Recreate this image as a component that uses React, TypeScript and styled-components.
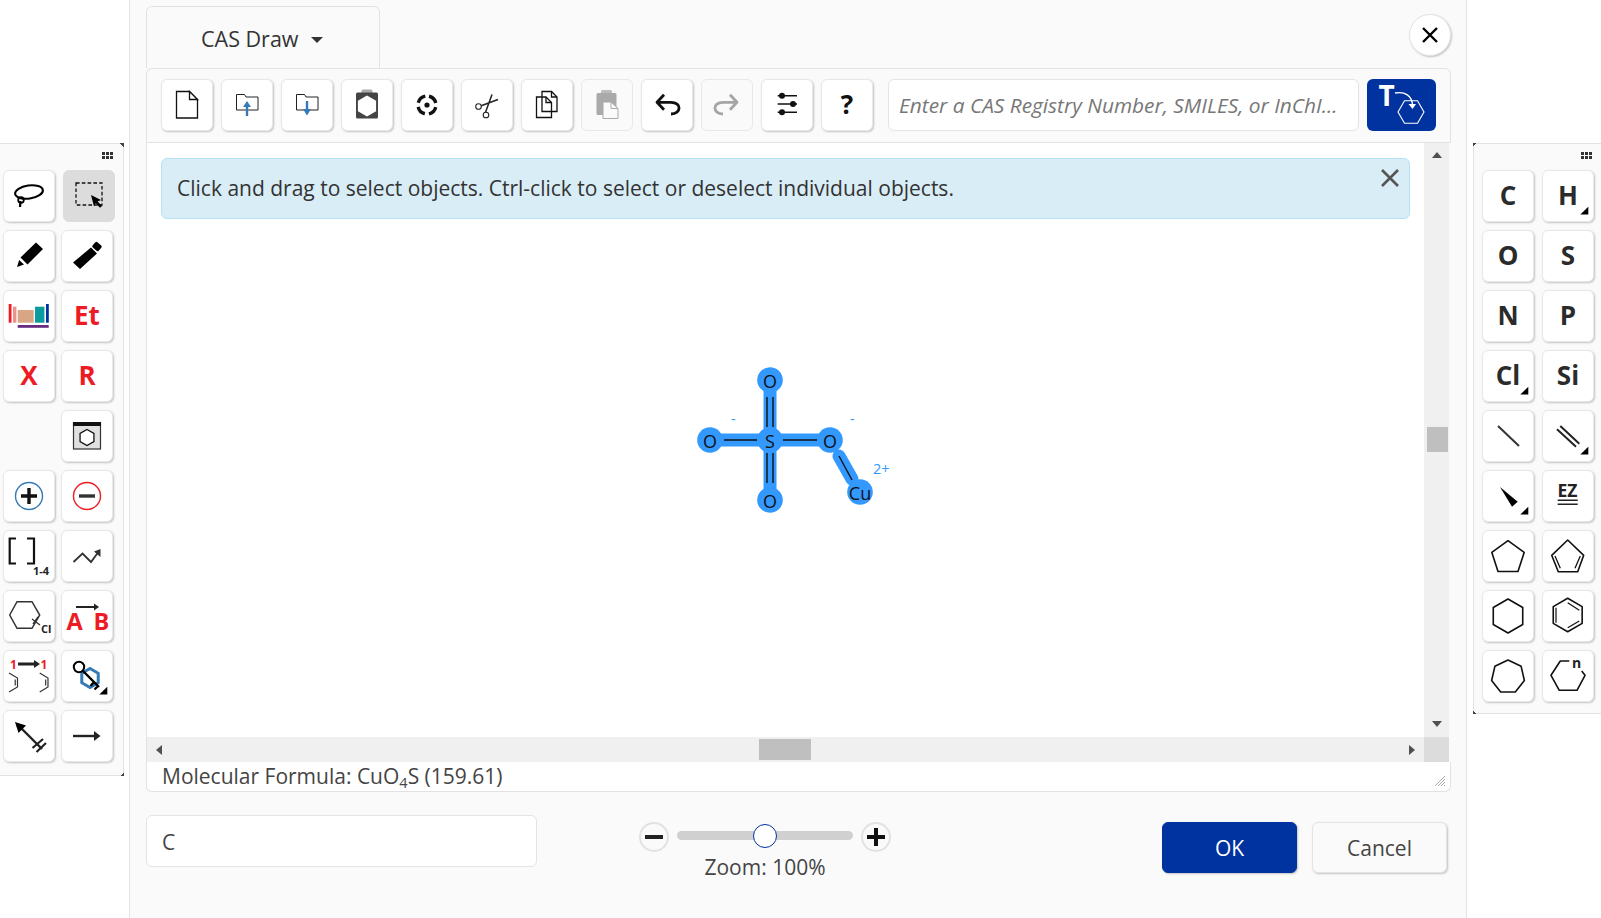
import React from "react";
import styled, { createGlobalStyle } from "styled-components";

const Global = createGlobalStyle`
  html, body { margin: 0; padding: 0; background: #fff; }
  body { font-family: "Open Sans", "Noto Sans", sans-serif; color: #333; overflow: hidden; }
  * { box-sizing: border-box; }
`;

const RED = "#ed1c24";
const BLUE = "#337ab7";
const NAVY = "#0033a0";

const Page = styled.div`
  display: flex;
  width: 1601px;
  height: 918px;
  align-items: flex-start;
  background: #fff;
`;

const SidePanel = styled.aside<{ $side: "left" | "right"; $height: number }>`
  position: relative;
  flex: none;
  width: ${(p) => (p.$side === "left" ? "124px" : "128px")};
  height: ${(p) => p.$height}px;
  margin-top: 143px;
  margin-left: ${(p) => (p.$side === "left" ? "0" : "6px")};
  background: #fafafa;
  border-top: 1px solid #e2e2e2;
  border-bottom: 1px solid #e2e2e2;
  border-left: ${(p) => (p.$side === "right" ? "1px solid #e2e2e2" : "none")};
  border-right: ${(p) => (p.$side === "left" ? "1px solid #e2e2e2" : "none")};
  padding: 26px 0 0 ${(p) => (p.$side === "left" ? "3px" : "8px")};
  &::before {
    content: "";
    position: absolute;
    top: -1px;
    ${(p) => (p.$side === "left" ? "right: -1px;" : "left: -1px;")}
    width: 4px;
    height: 4px;
    background: linear-gradient(
      ${(p) => (p.$side === "left" ? "225deg" : "135deg")},
      #444 50%,
      transparent 50%
    );
  }
  &::after {
    content: "";
    position: absolute;
    bottom: -1px;
    ${(p) => (p.$side === "left" ? "right: -1px;" : "left: -1px;")}
    width: 4px;
    height: 4px;
    background: linear-gradient(
      ${(p) => (p.$side === "left" ? "315deg" : "45deg")},
      #444 50%,
      transparent 50%
    );
  }
`;

const Grip = styled.div<{ $side: "left" | "right" }>`
  position: absolute;
  top: 8px;
  right: ${(p) => (p.$side === "left" ? "10px" : "9px")};
  display: grid;
  grid-template-columns: repeat(3, 3px);
  gap: 1px;
  span {
    width: 3px;
    height: 3px;
    background: #333;
  }
`;

const ToolGrid = styled.div<{ $gap: number }>`
  display: grid;
  grid-template-columns: 52px 52px;
  grid-auto-rows: 52px;
  column-gap: ${(p) => p.$gap}px;
  row-gap: 8px;
`;

const ToolBtn = styled.div<{ $color?: string; $active?: boolean; $disabled?: boolean }>`
  flex: none;
  width: 52px;
  height: 52px;
  display: flex;
  align-items: center;
  justify-content: center;
  padding-bottom: 2px;
  border-radius: 6px;
  background: ${(p) => (p.$active ? "#dcdcdc" : p.$disabled ? "#fafafa" : "#fff")};
  border: 1px solid ${(p) => (p.$active ? "#dcdcdc" : "#e8e8e8")};
  box-shadow: ${(p) => (p.$disabled || p.$active ? "none" : "1px 1px 2px rgba(0,0,0,.22)")};
  color: ${(p) => p.$color ?? "#2b2b2b"};
  font-weight: 700;
  font-size: 26px;
  line-height: 1;
  margin-left: ${(p) => (p.$active ? "2px" : "0")};
  svg { flex: none; margin-bottom: -2px; overflow: visible; }
`;

const Blank = styled.div``;

const Dialog = styled.main`
  flex: none;
  width: 1338px;
  height: 918px;
  margin-left: 5px;
  background: #fafafa;
  border-left: 1px solid #e2e2e2;
  border-right: 1px solid #e2e2e2;
  padding: 6px 15px 0 16px;
  display: flex;
  flex-direction: column;
`;

const TabRow = styled.div`
  display: flex;
  justify-content: space-between;
  align-items: flex-start;
  height: 62px;
`;

const Tab = styled.div`
  width: 234px;
  height: 62px;
  border: 1px solid #e2e2e2;
  border-bottom: none;
  border-radius: 6px 6px 0 0;
  display: flex;
  align-items: center;
  padding: 1px 0 0 54px;
  gap: 12px;
  font-size: 21.5px;
  color: #333;
`;

const Caret = styled.span`
  width: 0;
  height: 0;
  margin-top: 3px;
  border-left: 6px solid transparent;
  border-right: 6px solid transparent;
  border-top: 6px solid #333;
`;

const CloseCircle = styled.div`
  width: 42px;
  height: 42px;
  margin-top: 8px;
  border-radius: 50%;
  background: #fff;
  border: 1px solid #e4e4e4;
  box-shadow: 1px 1px 2px rgba(0, 0, 0, 0.22);
  display: flex;
  align-items: center;
  justify-content: center;
`;

const Toolbar = styled.div`
  height: 75px;
  border: 1px solid #e2e2e2;
  border-radius: 6px 6px 0 0;
  display: flex;
  align-items: flex-start;
  gap: 8px;
  padding: 10px 0 0 14px;
  ${ToolBtn} svg { margin-left: 2px; }
`;

const SearchField = styled.div`
  width: 471px;
  height: 52px;
  margin-left: 7px;
  background: #fff;
  border: 1px solid #e4e4e4;
  border-radius: 6px;
  display: flex;
  align-items: center;
  padding-left: 10px;
  font-size: 20.85px;
  font-style: italic;
  color: #777;
  white-space: nowrap;
`;

const ConvertBtn = styled.div`
  width: 69px;
  height: 52px;
  background: ${NAVY};
  border-radius: 6px;
  svg { overflow: visible; display: block; }
`;

const Workspace = styled.div`
  display: grid;
  grid-template-columns: 1fr 25px;
  grid-template-rows: 594px 25px;
  width: 1303px;
  border-left: 1px solid #e2e2e2;
  background: #fff;
`;

const Canvas = styled.div`
  position: relative;
  background: #fff;
  overflow: hidden;
  padding: 15px 14px 0 14px;
`;

const Notice = styled.div`
  height: 61px;
  display: flex;
  align-items: center;
  justify-content: space-between;
  padding: 0 10px 2px 15px;
  background: #d9edf7;
  border: 1px solid #b5e2f5;
  border-radius: 6px;
  font-size: 21px;
  color: #333;
  svg { align-self: flex-start; margin-top: 10px; flex: none; }
`;

const Molecule = styled.svg`
  position: absolute;
  left: 0;
  top: 0;
`;

const ScrollV = styled.div`
  position: relative;
  background: #f0f0f0;
  display: flex;
  flex-direction: column;
  justify-content: space-between;
  align-items: center;
  padding: 9px 0 10px 1px;
`;

const ScrollH = styled.div`
  position: relative;
  background: #f0f0f0;
  display: flex;
  justify-content: space-between;
  align-items: center;
  padding: 0 9px;
`;

const Corner = styled.div`
  background: #dcdcdc;
`;

const Arrow = styled.span<{ $dir: "up" | "down" | "left" | "right" }>`
  width: 0;
  height: 0;
  border-style: solid;
  border-color: transparent;
  ${(p) =>
    p.$dir === "up"
      ? "border-width: 0 5.5px 6px; border-bottom-color: #505050;"
      : p.$dir === "down"
      ? "border-width: 6px 5.5px 0; border-top-color: #505050;"
      : p.$dir === "left"
      ? "border-width: 5.5px 6px 5.5px 0; border-right-color: #505050;"
      : "border-width: 5.5px 0 5.5px 6px; border-left-color: #505050;"}
`;

const ThumbV = styled.div`
  position: absolute;
  left: 3px;
  top: 284px;
  width: 21px;
  height: 25px;
  background: #bfbfbf;
`;

const ThumbH = styled.div`
  position: absolute;
  left: 612px;
  top: 2px;
  width: 52px;
  height: 21px;
  background: #bfbfbf;
`;

const Status = styled.div`
  position: relative;
  height: 30px;
  width: 1305px;
  background: #fff;
  border: 1px solid #e2e2e2;
  border-top: none;
  border-radius: 0 0 6px 6px;
  padding-left: 15px;
  font-size: 21px;
  line-height: 28px;
  color: #444;
  white-space: nowrap;
  sub {
    font-size: 14.5px;
    line-height: 0;
    vertical-align: -4px;
  }
`;

const ResizeGrip = styled.svg`
  position: absolute;
  right: 4px;
  bottom: 4px;
`;

const Footer = styled.div`
  display: flex;
  align-items: flex-start;
  width: 1301px;
`;

const NameField = styled.div`
  width: 391px;
  height: 52px;
  margin-top: 23px;
  background: #fff;
  border: 1px solid #e4e4e4;
  border-radius: 6px;
  display: flex;
  align-items: center;
  padding: 1px 0 0 15px;
  font-size: 21px;
  color: #444;
`;

const ZoomGroup = styled.div`
  width: 252px;
  margin: 30px 0 0 102px;
  display: flex;
  flex-direction: column;
  align-items: center;
`;

const ZoomRow = styled.div`
  display: flex;
  align-items: center;
  gap: 8px;
  height: 30px;
  width: 100%;
`;

const RoundBtn = styled.div`
  flex: none;
  width: 30px;
  height: 30px;
  border-radius: 50%;
  background: #fafafa;
  border: 2px solid #e2e2e2;
  display: flex;
  align-items: center;
  justify-content: center;
`;

const Track = styled.div`
  position: relative;
  flex: 1;
  height: 9px;
  margin-top: -3px;
  border-radius: 5px;
  background: #d0d0d0;
`;

const Thumb = styled.div`
  position: absolute;
  left: 76px;
  top: -7px;
  width: 24px;
  height: 24px;
  border-radius: 50%;
  background: #fff;
  border: 1px solid ${NAVY};
`;

const ZoomLabel = styled.div`
  font-size: 21px;
  line-height: 30px;
  color: #444;
`;

const Actions = styled.div`
  margin: 30px 0 0 auto;
  display: flex;
  gap: 15px;
`;

const ActionBtn = styled.div<{ $primary?: boolean }>`
  width: 135px;
  height: 51px;
  border-radius: 6px;
  display: flex;
  align-items: center;
  justify-content: center;
  font-size: 21px;
  background: ${(p) => (p.$primary ? NAVY : "#fafafa")};
  color: ${(p) => (p.$primary ? "#fff" : "#444")};
  border: 1px solid ${(p) => (p.$primary ? NAVY : "#e4e4e4")};
  box-shadow: 1px 1px 2px rgba(0, 0, 0, 0.22);
`;

/* ---- drawings ---- */

const poly = (n: number, r: number, cx = 26, cy = 26, rot = -90) =>
  Array.from({ length: n }, (_, i) => {
    const a = ((rot + (360 / n) * i) * Math.PI) / 180;
    return `${(cx + r * Math.cos(a)).toFixed(2)},${(cy + r * Math.sin(a)).toFixed(2)}`;
  }).join(" ");

const Ic: React.FC<{ children: React.ReactNode }> = ({ children }) => (
  <svg width={52} height={52} viewBox="0 0 52 52" fill="none">
    {children}
  </svg>
);

const Corner3 = () => <polygon points="38.3,44.5 46.3,44.5 46.3,36.7" fill="#000" />;

const iconFont = { fontFamily: "'Open Sans', sans-serif", fontWeight: 700 } as const;

const Lasso = () => (
  <Ic>
    <ellipse cx="26" cy="22" rx="14" ry="6.5" transform="rotate(-8 26 22)" stroke="#000" strokeWidth="2.1" />
    <circle cx="18" cy="30" r="2.8" stroke="#000" strokeWidth="1.8" />
    <path d="M17.5 31 L17 37" stroke="#000" strokeWidth="2.2" />
  </Ic>
);
const Marquee = () => (
  <Ic>
    <rect x="13" y="13" width="26" height="22" stroke="#111" strokeWidth="1.3" strokeDasharray="3.6 2.2" />
    <path d="M28 25 L38 30 L34.6 31.6 L39 36 L37 37.8 L32.8 33.2 L31 36.6 Z" fill="#000" />
  </Ic>
);
const Pencil = () => (
  <Ic>
    <polygon points="33,12.5 40,19 24.5,34.5 17.5,27.5" fill="#000" />
    <polygon points="14,37 16.2,30 21,34.5" fill="#000" />
  </Ic>
);
const Eraser = () => (
  <Ic>
    <polygon points="30,17.5 36,23.5 19,39 12,32.5" fill="#000" />
    <rect x="32" y="13" width="8" height="7" rx="1.5" transform="rotate(42 36 16.5)" fill="#000" />
  </Ic>
);
const Periodic = () => (
  <Ic>
    <rect x="5.7" y="14" width="2.8" height="18.7" fill={RED} />
    <rect x="10" y="16.7" width="3.4" height="16" fill="#ee8f8a" />
    <rect x="14.7" y="20" width="16" height="12.7" fill="#d8a585" />
    <rect x="32" y="16.7" width="9.4" height="16" fill="#0a9b9f" />
    <rect x="43" y="14" width="2.8" height="18.7" fill={NAVY} />
    <rect x="14.7" y="35" width="31" height="2.8" fill="#6a2c82" />
  </Ic>
);
const Template = () => (
  <Ic>
    <rect x="12.5" y="13" width="27" height="26" fill="#e0e0e0" stroke="#333" strokeWidth="1.2" />
    <rect x="12" y="12" width="28" height="4" fill="#111" />
    <polygon points={poly(6, 8, 26, 27.5)} fill="#fff" stroke="#111" strokeWidth="1.3" />
  </Ic>
);
const PlusCircle = () => (
  <Ic>
    <circle cx="26" cy="26" r="13.5" fill="#fff" stroke={BLUE} strokeWidth="1.4" />
    <path d="M26 18 V34 M18 26 H34" stroke="#111" strokeWidth="3.4" />
  </Ic>
);
const MinusCircle = () => (
  <Ic>
    <circle cx="26" cy="26" r="13.5" fill="#fff" stroke={RED} strokeWidth="1.4" />
    <path d="M18 26 H34" stroke="#333" strokeWidth="3.4" />
  </Ic>
);
const Brackets = () => (
  <Ic>
    <path d="M13 8.5 H6.7 V33.5 H13 M24 8.5 H31 V33.5 H24" stroke="#111" strokeWidth="2.2" />
    <text x="30" y="45" fontSize="11" style={iconFont} fill="#222">1-4</text>
  </Ic>
);
const Zigzag = () => (
  <Ic>
    <path d="M12.5 32 L21.5 23.5 L30 32 L38.5 20.5" stroke="#333" strokeWidth="1.8" />
    <polygon points="39.5,19 39.5,27 33,21.5" fill="#333" />
  </Ic>
);
const HexCl = () => (
  <Ic>
    <polygon points="6.7,25 14,11.7 29,11.7 36.7,25 29,38.3 14,38.3" stroke="#333" strokeWidth="1.5" />
    <path d="M29 29 L37 35 M35 27 L30 34" stroke="#333" strokeWidth="1.3" />
    <text x="38" y="43" fontSize="11" fontFamily="'Open Sans', sans-serif" fill="#222">Cl</text>
  </Ic>
);
const AtoB = () => (
  <Ic>
    <path d="M15 17 H34" stroke="#222" strokeWidth="2" />
    <polygon points="33,13.5 38,17 33,20.5" fill="#222" />
    <text x="5.5" y="40" fontSize="23.5" style={iconFont} fill={RED}>A</text>
    <text x="32.5" y="40" fontSize="23.5" style={iconFont} fill={RED}>B</text>
  </Ic>
);
const Mapping = () => (
  <Ic>
    <text x="7" y="19" fontSize="12" style={iconFont} fill={RED}>1</text>
    <text x="37.5" y="19" fontSize="12" style={iconFont} fill={RED}>1</text>
    <path d="M15 14 H32" stroke="#222" strokeWidth="3" />
    <polygon points="31,10 37,14 31,18" fill="#222" />
    <path d="M6 23 L14.5 28 V37 L6 42 M12.2 29.5 V35.5 M36.7 23 L45 28 V37 L36.7 42 M42.7 29.5 V35.5" stroke="#333" strokeWidth="1.2" />
  </Ic>
);
const KeyHex = () => (
  <Ic>
    <polygon points={poly(6, 9.5, 29, 28)} stroke={BLUE} strokeWidth="3" />
    <circle cx="18" cy="17" r="5.2" stroke="#000" strokeWidth="2" />
    <path d="M22 21 L38 37 M33 32 L29.5 36 M37 36 L33.5 39.5" stroke="#000" strokeWidth="2.4" />
    <Corner3 />
  </Ic>
);
const ArrowCross = () => (
  <Ic>
    <path d="M15 15 L39 39" stroke="#222" strokeWidth="2.4" />
    <polygon points="12,12 23,15.5 15.5,23" fill="#000" />
    <path d="M29.5 38 L40 29 M33.5 42 L43 33" stroke="#222" strokeWidth="2.2" />
  </Ic>
);
const LongArrow = () => (
  <Ic>
    <path d="M12 26 H34" stroke="#222" strokeWidth="2.4" />
    <polygon points="33,21 39.5,26 33,31" fill="#222" />
  </Ic>
);
const SingleBond = () => (
  <Ic>
    <path d="M16 16 L37 36" stroke="#333" strokeWidth="2" />
  </Ic>
);
const DoubleBond = () => (
  <Ic>
    <path d="M15 19.3 L34 36.7 M18.3 16 L37.3 33.7" stroke="#222" strokeWidth="2" />
    <Corner3 />
  </Ic>
);
const Wedge = () => (
  <Ic>
    <polygon points="18,17 35.7,31.7 30,36.7" fill="#000" />
    <Corner3 />
  </Ic>
);
const EZ = () => (
  <Ic>
    <text x="15.5" y="27" fontSize="17.5" style={iconFont} fill="#222">EZ</text>
    <path d="M15.7 30.3 H35.7 M15.7 34.3 H35.7" stroke="#222" strokeWidth="1.5" />
  </Ic>
);
const Ring = ({ n, r, cy }: { n: number; r: number; cy: number }) => (
  <Ic>
    <polygon points={poly(n, r, 26, cy)} stroke="#111" strokeWidth="1.6" strokeLinejoin="round" />
  </Ic>
);
const Pent2 = () => (
  <Ic>
    <polygon points="25.7,10 9.7,25.3 16.3,41.7 35.7,41.7 41.7,25.3" stroke="#111" strokeWidth="1.6" strokeLinejoin="round" />
    <path d="M13 26 L18.3 38.3 M38.3 26 L33 38.3" stroke="#111" strokeWidth="1.3" />
  </Ic>
);
const Benzene = () => (
  <Ic>
    <polygon points={poly(6, 16.7, 25.7, 25)} stroke="#111" strokeWidth="1.6" strokeLinejoin="round" />
    <path d="M14 17.7 V32.7 M25.7 12.7 L37.3 20.3 M37.3 31 L25.7 37.7" stroke="#111" strokeWidth="1.2" />
  </Ic>
);
const RingN = () => (
  <Ic>
    <polyline points="27.3,11 18.3,11 9,25.3 17.3,40.3 35,40.3 43,25.3 39.7,21" stroke="#111" strokeWidth="1.6" strokeLinejoin="round" />
    <text x="30" y="17.5" fontSize="14" style={iconFont} fill="#222">n</text>
  </Ic>
);

const NewDoc = () => (
  <Ic>
    <path d="M14.5 12.5 H27.5 L35.5 20.5 V39 H14.5 Z" fill="#fff" stroke="#111" strokeWidth="1.3" />
    <path d="M27.5 12.5 V20.5 H35.5 Z" fill="#fff" stroke="#111" strokeWidth="1.3" />
  </Ic>
);
const Folder = ({ down }: { down?: boolean }) => (
  <Ic>
    <path d="M14.5 15.5 H22.5 L24 18 H36 V31 H14.5 Z" fill="#fff" stroke="#222" strokeWidth="1" />
    {down ? (
      <>
        <path d="M25 22 V32" stroke={BLUE} strokeWidth="2.4" />
        <polygon points="21,30 29,30 25,36.5" fill={BLUE} />
      </>
    ) : (
      <>
        <path d="M25 26 V37" stroke={BLUE} strokeWidth="2.4" />
        <polygon points="21,28 29,28 25,22" fill={BLUE} />
      </>
    )}
  </Ic>
);
const ClipHex = () => (
  <Ic>
    <rect x="19.5" y="10.5" width="11" height="5" rx="1.5" fill="#aaa" />
    <rect x="14" y="13.5" width="22" height="26" rx="1.5" fill="#444" />
    <polygon points={poly(6, 10.5, 25, 27)} fill="#fff" />
  </Ic>
);
const Target = () => (
  <Ic>
    <circle cx="25" cy="26" r="9" stroke="#111" strokeWidth="3.4" strokeDasharray="10 4.13" transform="rotate(-77 25 26)" />
    <circle cx="25" cy="26" r="2.6" fill="#111" />
  </Ic>
);
const Scissors = () => (
  <Ic>
    <circle cx="16.5" cy="27.5" r="2.8" stroke="#222" strokeWidth="1.1" />
    <circle cx="24" cy="36" r="2.8" stroke="#222" strokeWidth="1.1" />
    <path d="M19.2 26.8 L36 20.5 M23.5 33.2 L30 15.5" stroke="#222" strokeWidth="1.5" />
  </Ic>
);
const CopyDocs = () => (
  <Ic>
    <path d="M20 12.5 H29.5 L35 18 V32.5 H20 Z" fill="#fff" stroke="#111" strokeWidth="1.3" />
    <path d="M29.5 12.5 V18 H35" stroke="#111" strokeWidth="1.3" />
    <path d="M14.5 18 H24 L29.5 23.5 V38.5 H14.5 Z" stroke="#111" strokeWidth="1.3" />
    <path d="M24 18 V23.5 H29.5" stroke="#111" strokeWidth="1.3" />
  </Ic>
);
const PasteOff = () => (
  <Ic>
    <rect x="19" y="11" width="11" height="5" rx="1.5" fill="#bbb" />
    <rect x="14.5" y="14" width="20" height="22" rx="1.5" fill="#aaa" />
    <path d="M21 23 H29 L36 29.5 V39.5 H21 Z" fill="#fafafa" stroke="#aaa" strokeWidth="1" />
    <path d="M29 23 V29.5 H36" stroke="#aaa" strokeWidth="1" />
  </Ic>
);
const Undo = ({ off }: { off?: boolean }) => {
  const c = off ? "#a5a5a5" : "#111";
  return (
    <Ic>
      <g transform={off ? "matrix(-1 0 0 1 50 0)" : undefined}>
        <path d="M22 15.7 L15 23.3 L22 30.7 M15 23.3 H29 C40 23.3 39.5 35 29 35" stroke={c} strokeWidth="2.8" strokeLinejoin="round" />
      </g>
    </Ic>
  );
};
const Sliders = () => (
  <Ic>
    <path d="M15.7 16.7 H35 M15.7 25 H35 M15.7 33.3 H35" stroke="#111" strokeWidth="1.6" />
    <circle cx="20" cy="16.7" r="3" fill="#111" />
    <circle cx="31" cy="25" r="3" fill="#111" />
    <circle cx="20" cy="33.3" r="3" fill="#111" />
  </Ic>
);
const Cross = ({ size, color, w }: { size: number; color: string; w: number }) => (
  <svg width={size} height={size} viewBox={`0 0 ${size} ${size}`}>
    <path d={`M1 1 L${size - 1} ${size - 1} M${size - 1} 1 L1 ${size - 1}`} stroke={color} strokeWidth={w} />
  </svg>
);
const ConvertIcon = () => (
  <svg width="69" height="52" viewBox="0 0 69 52" fill="none">
    <text x="11.5" y="27" fontSize="28" style={iconFont} fill="#fff">T</text>
    <polygon points={poly(6, 13, 44, 33, 0)} stroke="#fff" strokeWidth="1.1" />
    <path d="M28 14 C38 12 45 17 45.5 26" stroke="#fff" strokeWidth="1.3" />
    <polygon points="41.5,25 49,25 45.5,30" fill="#fff" />
  </svg>
);

const molFont = "'Open Sans', sans-serif";
const Hl = "#3399ff";

const MoleculeDrawing = () => {
  const atoms: [number, number, string][] = [
    [623, 237, "O"],
    [563, 297, "O"],
    [623, 297, "S"],
    [683, 297, "O"],
    [623, 357, "O"],
    [713, 349, "Cu"],
  ];
  return (
    <Molecule width="1277" height="594" viewBox="0 0 1277 594">
      <g stroke={Hl} strokeWidth="13">
        <path d="M623 240 V354 M563 297 H683" />
        <path d="M692 313 L705 336" strokeLinecap="round" />
      </g>
      {atoms.map(([x, y], i) => (
        <circle key={i} cx={x} cy={y} r={12.8} fill={Hl} />
      ))}
      <g stroke="#111" strokeWidth="1.4">
        <path d="M620 254 V284 M626 254 V284 M620 310 V340 M626 310 V340" />
        <path d="M577 297 H610 M636 297 H670" />
        <path d="M692 313 L705 337" />
      </g>
      {atoms.map(([x, y, t], i) => (
        <text key={i} x={x} y={y + 7.6} textAnchor="middle" fontSize="18" fontFamily={molFont} fill="#111">
          {t}
        </text>
      ))}
      <g fontFamily={molFont} fontSize="14.5" fill={Hl}>
        <text x="584" y="281">-</text>
        <text x="703" y="281">-</text>
        <text x="726" y="331">2+</text>
      </g>
    </Molecule>
  );
};

type Item = { c?: React.ReactNode; color?: string; active?: boolean; blank?: boolean; key: string };

const leftTools: Item[] = [
  { key: "lasso", c: <Lasso /> },
  { key: "marquee", c: <Marquee />, active: true },
  { key: "pencil", c: <Pencil /> },
  { key: "eraser", c: <Eraser /> },
  { key: "periodic", c: <Periodic /> },
  { key: "et", c: "Et", color: RED },
  { key: "x", c: "X", color: RED },
  { key: "r", c: "R", color: RED },
  { key: "b1", blank: true },
  { key: "template", c: <Template /> },
  { key: "plus", c: <PlusCircle /> },
  { key: "minus", c: <MinusCircle /> },
  { key: "brackets", c: <Brackets /> },
  { key: "zigzag", c: <Zigzag /> },
  { key: "hexcl", c: <HexCl /> },
  { key: "atob", c: <AtoB /> },
  { key: "map", c: <Mapping /> },
  { key: "key", c: <KeyHex /> },
  { key: "across", c: <ArrowCross /> },
  { key: "arrow", c: <LongArrow /> },
];

const Corner1 = ({ label }: { label: string }) => (
  <Ic>
    <text x="26" y="34.5" textAnchor="middle" fontSize="26" style={iconFont} fill="#2b2b2b">{label}</text>
    <Corner3 />
  </Ic>
);

const rightTools: Item[] = [
  { key: "C", c: "C" },
  { key: "H", c: <Corner1 label="H" /> },
  { key: "O", c: "O" },
  { key: "S", c: "S" },
  { key: "N", c: "N" },
  { key: "P", c: "P" },
  { key: "Cl", c: <Corner1 label="Cl" /> },
  { key: "Si", c: "Si" },
  { key: "sb", c: <SingleBond /> },
  { key: "db", c: <DoubleBond /> },
  { key: "wedge", c: <Wedge /> },
  { key: "ez", c: <EZ /> },
  { key: "p5", c: <Ring n={5} r={17} cy={27.7} /> },
  { key: "p5d", c: <Pent2 /> },
  { key: "h6", c: <Ring n={6} r={17} cy={26} /> },
  { key: "bz", c: <Benzene /> },
  { key: "h7", c: <Ring n={7} r={16.8} cy={26.8} /> },
  { key: "hn", c: <RingN /> },
];

const top: { key: string; c: React.ReactNode; off?: boolean }[] = [
  { key: "new", c: <NewDoc /> },
  { key: "open", c: <Folder /> },
  { key: "save", c: <Folder down /> },
  { key: "cliphex", c: <ClipHex /> },
  { key: "target", c: <Target /> },
  { key: "cut", c: <Scissors /> },
  { key: "copy", c: <CopyDocs /> },
  { key: "paste", c: <PasteOff />, off: true },
  { key: "undo", c: <Undo /> },
  { key: "redo", c: <Undo off />, off: true },
  { key: "sliders", c: <Sliders /> },
];

const GripDots = ({ side }: { side: "left" | "right" }) => (
  <Grip $side={side}>
    {Array.from({ length: 6 }, (_, i) => (
      <span key={i} />
    ))}
  </Grip>
);

const Tools = ({ items, gap }: { items: Item[]; gap: number }) => (
  <ToolGrid $gap={gap}>
    {items.map((t) =>
      t.blank ? (
        <Blank key={t.key} />
      ) : (
        <ToolBtn key={t.key} $color={t.color} $active={t.active}>
          {t.c}
        </ToolBtn>
      )
    )}
  </ToolGrid>
);

export default function App() {
  return (
    <>
      <Global />
      <Page>
        <SidePanel $side="left" $height={633}>
          <GripDots side="left" />
          <Tools items={leftTools} gap={6} />
        </SidePanel>
        <Dialog>
          <TabRow>
            <Tab>
              CAS Draw
              <Caret />
            </Tab>
            <CloseCircle>
              <Cross size={16} color="#000" w={2.4} />
            </CloseCircle>
          </TabRow>
          <Toolbar>
            {top.map((t) => (
              <ToolBtn key={t.key} $disabled={t.off}>
                {t.c}
              </ToolBtn>
            ))}
            <ToolBtn $color="#111">?</ToolBtn>
            <SearchField>Enter a CAS Registry Number, SMILES, or InChI...</SearchField>
            <ConvertBtn>
              <ConvertIcon />
            </ConvertBtn>
          </Toolbar>
          <Workspace>
            <Canvas>
              <Notice>
                Click and drag to select objects. Ctrl-click to select or deselect individual objects.
                <Cross size={18} color="#555" w={2.6} />
              </Notice>
              <MoleculeDrawing />
            </Canvas>
            <ScrollV>
              <Arrow $dir="up" />
              <ThumbV />
              <Arrow $dir="down" />
            </ScrollV>
            <ScrollH>
              <Arrow $dir="left" />
              <ThumbH />
              <Arrow $dir="right" />
            </ScrollH>
            <Corner />
          </Workspace>
          <Status>
            Molecular Formula: CuO<sub>4</sub>S (159.61)
            <ResizeGrip width="12" height="12" viewBox="0 0 12 12">
              <path d="M1 11 L11 1 M4 11 L11 4 M7 11 L11 7 M10 11 L11 10" stroke="#aaa" strokeWidth="1" />
            </ResizeGrip>
          </Status>
          <Footer>
            <NameField>C</NameField>
            <ZoomGroup>
              <ZoomRow>
                <RoundBtn>
                  <svg width="18" height="4" viewBox="0 0 18 4"><rect width="18" height="4" fill="#222" /></svg>
                </RoundBtn>
                <Track>
                  <Thumb />
                </Track>
                <RoundBtn>
                  <svg width="18" height="18" viewBox="0 0 18 18"><path d="M9 0 V18 M0 9 H18" stroke="#111" strokeWidth="4" /></svg>
                </RoundBtn>
              </ZoomRow>
              <ZoomLabel>Zoom: 100%</ZoomLabel>
            </ZoomGroup>
            <Actions>
              <ActionBtn $primary>OK</ActionBtn>
              <ActionBtn>Cancel</ActionBtn>
            </Actions>
          </Footer>
        </Dialog>
        <SidePanel $side="right" $height={571}>
          <GripDots side="right" />
          <Tools items={rightTools} gap={8} />
        </SidePanel>
      </Page>
    </>
  );
}
